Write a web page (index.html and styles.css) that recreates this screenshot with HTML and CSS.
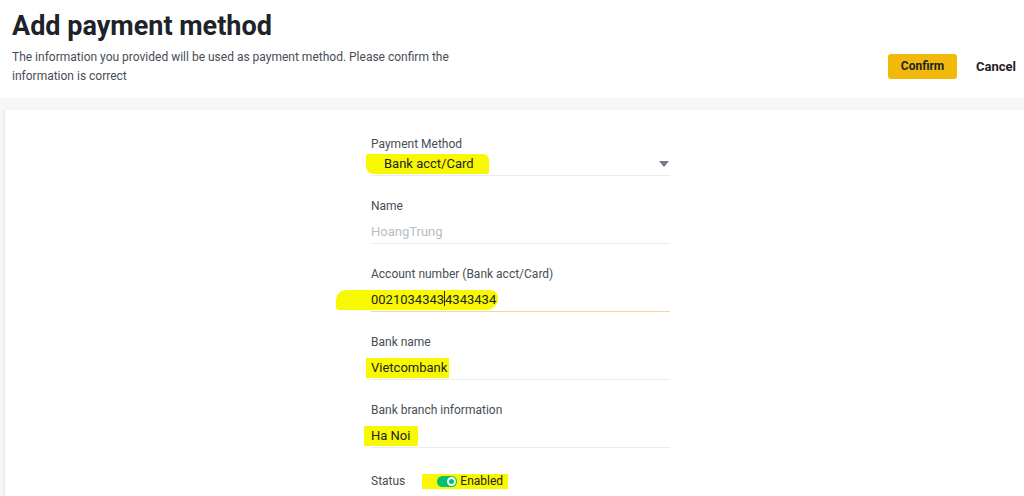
FILE: index.html
```html
<!DOCTYPE html>
<html lang="en">
  <head>
    <meta charset="UTF-8" />
    <meta name="viewport" content="width=device-width, initial-scale=1.0" />
    <title>Add payment method</title>
    <link rel="stylesheet" href="styles.css">
  </head>

  <body>
    <div id="header">
      <div class="intro">
        <h1>Add payment method</h1>
        <p>The information you provided will be used as payment method. Please confirm the information is correct</p>
      </div>
      <div class="actions">
        <button class="btn-confirm">Confirm</button>
        <button class="btn-cancel">Cancel</button>
      </div>
    </div>

    <div id="band">
      <div id="card">
        <form class="pay-form">
          <div class="field">
            <div class="label">Payment Method</div>
            <div class="input select">
              <span class="mark mark-method">Bank acct/Card</span>
              <svg class="caret" width="10" height="6" viewBox="0 0 10 6">
                <path d="M0 0 L10 0 L5 6 Z" fill="#707a8a" />
              </svg>
            </div>
          </div>

          <div class="field">
            <div class="label">Name</div>
            <div class="input disabled">HoangTrung</div>
          </div>

          <div class="field">
            <div class="label">Account number (Bank acct/Card)</div>
            <div class="input focused">
              <span class="mark mark-account">0021034343<span class="cursor"></span>4343434</span>
            </div>
          </div>

          <div class="field">
            <div class="label">Bank name</div>
            <div class="input">
              <span class="mark mark-bank">Vietcombank</span>
            </div>
          </div>

          <div class="field">
            <div class="label">Bank branch information</div>
            <div class="input">
              <span class="mark mark-branch">Ha Noi</span>
            </div>
          </div>

          <div class="status-row">
            <span class="label">Status</span>
            <span class="mark mark-status">
              <span class="toggle"><span class="knob"></span></span>
              Enabled
            </span>
          </div>
        </form>
      </div>
    </div>
  </body>
</html>
```

FILE: styles.css
```css
html,
body {
  overflow: hidden;
}

body {
  font-family: Roboto, "Liberation Sans", sans-serif;
  background-color: #ffffff;
  color: #1e2329;
  margin: 0;
  padding: 0;
  height: 496px;
}

#header {
  display: flex;
  justify-content: space-between;
  align-items: center;
  height: 98px;
  padding: 0 8px 0 12px;
}

.intro {
  margin-top: -4px;
}

.intro h1 {
  font-size: 27px;
  font-weight: 700;
  line-height: 34px;
  margin: 0 0 5px 0;
  color: #1e2329;
}

.intro p {
  font-size: 12px;
  line-height: 19px;
  color: #474d57;
  margin: 0;
  width: 440px;
}

.actions {
  display: flex;
  align-items: center;
  gap: 19px;
  margin-top: 34px;
}

.btn-confirm {
  background-color: #f0b90b;
  border: none;
  border-radius: 3px;
  width: 69px;
  height: 25px;
  font-family: inherit;
  font-size: 12px;
  font-weight: 700;
  color: #1e2329;
  cursor: pointer;
}

.btn-cancel {
  background: none;
  border: none;
  padding: 0;
  font-family: inherit;
  font-size: 13px;
  font-weight: 700;
  color: #1e2329;
  cursor: pointer;
}

#band {
  background-color: #f7f7f9;
  padding: 12px 0 0 5px;
  height: 386px;
}

#card {
  box-sizing: border-box;
  background-color: #ffffff;
  height: 100%;
  box-shadow: -1px 0 2px rgba(0, 0, 0, 0.08);
  padding: 26px 0 0 366px;
}

.pay-form {
  width: 299px;
}

.field {
  margin-bottom: 22px;
}

.label {
  font-size: 12px;
  line-height: 16px;
  color: #474d57;
}

.input {
  display: flex;
  align-items: center;
  justify-content: space-between;
  height: 30px;
  box-sizing: border-box;
  padding-top: 6px;
  font-size: 13px;
  line-height: 20px;
  border-bottom: 1px solid #eaecef;
}

.input.select {
  height: 24px;
  padding-top: 0;
}

.input.disabled {
  color: #b7bdc6;
}

.input.focused {
  border-bottom-color: #f2dc8a;
}

.caret {
  margin-right: 1px;
}

/* marker highlights drawn over the screenshot */
.mark {
  background-color: #f8f800;
  display: inline-block;
  line-height: 20px;
}

.mark-method {
  padding: 0 15px 0 18px;
  margin-left: -5px;
  border-radius: 2px 6px 2px 8px;
}

.mark-account {
  padding: 0 2px 0 35px;
  margin-left: -35px;
  border-radius: 10px 8px 12px 3px;
}

.mark-bank {
  padding: 0 2px 0 5px;
  margin-left: -5px;
}

.mark-branch {
  padding: 0 8px 0 7px;
  margin-left: -7px;
}

.cursor {
  display: inline-block;
  width: 1px;
  height: 15px;
  background-color: #1e2329;
  vertical-align: -2px;
}

.status-row {
  display: flex;
  align-items: center;
  gap: 17px;
  margin-top: 25px;
}

.mark-status {
  display: inline-flex;
  align-items: center;
  gap: 3px;
  font-size: 12px;
  color: #1e2329;
  padding: 0 5px 0 15px;
  line-height: 15px;
}

.toggle {
  display: inline-block;
  position: relative;
  width: 20px;
  height: 11px;
  border-radius: 6px;
  background-color: #02c076;
}

.knob {
  position: absolute;
  top: 1px;
  right: 1px;
  width: 5px;
  height: 5px;
  border: 2px solid #ffffff;
  border-radius: 50%;
}
```
